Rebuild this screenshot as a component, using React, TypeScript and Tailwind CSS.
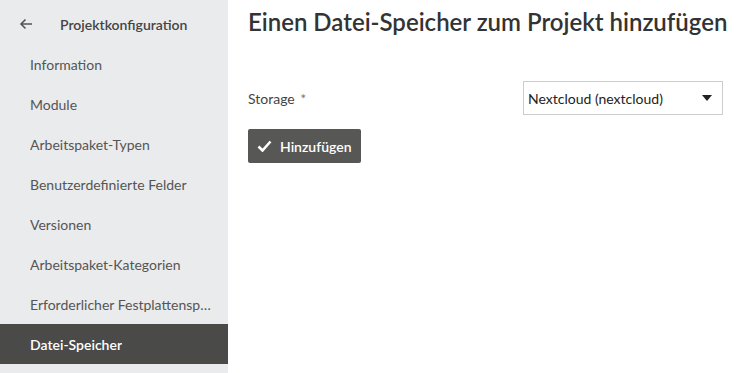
import React from 'react';

const items = [
  'Information',
  'Module',
  'Arbeitspaket-Typen',
  'Benutzerdefinierte Felder',
  'Versionen',
  'Arbeitspaket-Kategorien',
  'Erforderlicher Festplattenspeicher',
  'Datei-Speicher',
];

export default function App() {
  return (
    <div className="flex h-[373px] w-[749px] overflow-hidden bg-white font-['Lato','Noto_Sans',sans-serif] text-[#333]">
      <aside className="w-[228px] shrink-0 bg-[#eaebec] pt-[4px]">
        <div className="flex h-[40px] items-center pl-[19px]">
          <svg width="14" height="12" viewBox="0 0 14 12" className="text-[#555]">
            <path d="M13 6H2M6.5 1.5L2 6l4.5 4.5" fill="none" stroke="currentColor" strokeWidth="1.6" />
          </svg>
          <span className="ml-[27px] text-[14px] font-semibold text-[#444]">Projektkonfiguration</span>
        </div>
        {items.map((it) => {
          const active = it === 'Datei-Speicher';
          return (
            <div
              key={it}
              className={
                'flex h-[40px] items-center pl-[30px] pr-[16px] text-[14px] ' +
                (active ? 'bg-[#4a4a48] font-semibold text-white' : 'text-[#555]')
              }
            >
              <span className="truncate">{it}</span>
            </div>
          );
        })}
      </aside>
      <main className="flex-1 pl-[20px] pt-[6px]">
        <h1 className="text-[24px] font-semibold leading-[32px] text-[#333]">
          Einen Datei-Speicher zum Projekt hinzufügen
        </h1>
        <div className="mt-[43px] flex items-center">
          <label className="w-[275px] text-[14px] text-[#444]">
            Storage <span className="ml-[2px] text-[#777]">*</span>
          </label>
          <div className="flex h-[34px] w-[200px] items-center justify-between border border-[#ccc] bg-white pl-[4px] pr-[10px] text-[14px] text-[#222]">
            <span>Nextcloud (nextcloud)</span>
            <svg width="10" height="6" viewBox="0 0 10 6">
              <path d="M0 0h10L5 6z" fill="#222" />
            </svg>
          </div>
        </div>
        <button className="mt-[14px] flex h-[34px] items-center gap-[8px] rounded-[2px] bg-[#575756] px-[9px] text-[14px] font-semibold text-white">
          <svg width="15" height="12" viewBox="0 0 15 12">
            <path d="M1.5 6.5l4 4L13.5 1.5" fill="none" stroke="white" strokeWidth="2.6" />
          </svg>
          Hinzufügen
        </button>
      </main>
    </div>
  );
}
